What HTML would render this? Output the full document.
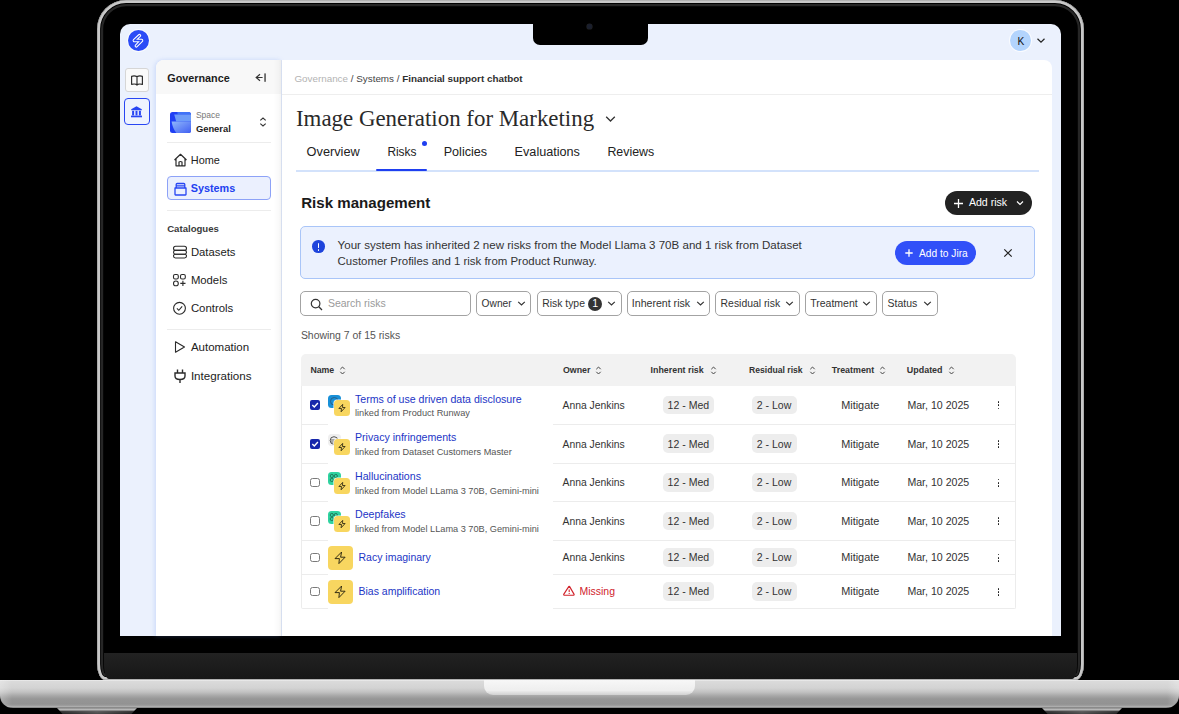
<!DOCTYPE html>
<html><head><meta charset="utf-8"><title>Risk management</title>
<style>
html,body{margin:0;padding:0;background:#000}
body{width:1179px;height:714px;background:#000;position:relative;overflow:hidden;font-family:"Liberation Sans",sans-serif}
.t{position:absolute;white-space:nowrap;line-height:1}
.r{position:absolute;display:block}
</style></head><body>
<div class="r" style="left:96.80px;top:-0.20px;width:987.00px;height:680.20px;border-radius:29px 29px 8px 8px / 29px 29px 16px 16px;background:#000;box-shadow:inset 0 0 0 0.6px #9a9a9a, inset 0 0 0 3.1px #c8c8c8, inset 0 0 0 4px #000, inset 0 0 0 6.2px #262626"></div>
<div class="r" style="left:104.00px;top:653.00px;width:973.00px;height:26.00px;background:linear-gradient(180deg,#222,#171717);border-radius:0 0 5px 5px / 0 0 13px 13px"></div>
<div class="r" style="left:0.00px;top:680.00px;width:1179.00px;height:28.00px;border-radius:0 0 13px 13px / 0 0 12px 12px;background:linear-gradient(180deg,#eeeeee 0px,#dadada 1.5px,#d3d3d3 8px,#c2c2c2 12px,#a6a6a6 16px,#969696 19px,#929292 24px,#a0a0a0 26px,#bababa 27px,#5a5a5a 28px)"></div>
<div class="r" style="left:0.00px;top:680.00px;width:1179.00px;height:28.00px;border-radius:0 0 14px 14px;background:linear-gradient(90deg,rgba(255,255,255,0.25) 0px,rgba(0,0,0,0) 12px,rgba(0,0,0,0) 1167px,rgba(255,255,255,0.25) 1179px)"></div>
<div class="r" style="left:484.00px;top:680.00px;width:211.00px;height:15.00px;border-radius:0 0 9px 9px;background:linear-gradient(180deg,#f7f7f7,#eeeeee 70%,#d0d0d0)"></div>
<div class="r" style="left:57.00px;top:708.00px;width:80.00px;height:6.00px;clip-path:polygon(0 0,100% 0,93% 100%,7% 100%);background:linear-gradient(180deg,#8f8f8f 0px,#a8a8a8 1.2px,#d0d0d0 2px,#404040 3px,#222 6px)"></div>
<div class="r" style="left:62.00px;top:711.00px;width:70.00px;height:3.00px;background:linear-gradient(90deg,rgba(0,0,0,0),rgba(255,255,255,0.18) 50%,rgba(0,0,0,0))"></div>
<div class="r" style="left:1042.00px;top:708.00px;width:80.00px;height:6.00px;clip-path:polygon(0 0,100% 0,93% 100%,7% 100%);background:linear-gradient(180deg,#8f8f8f 0px,#a8a8a8 1.2px,#d0d0d0 2px,#404040 3px,#222 6px)"></div>
<div class="r" style="left:1047.00px;top:711.00px;width:70.00px;height:3.00px;background:linear-gradient(90deg,rgba(0,0,0,0),rgba(255,255,255,0.18) 50%,rgba(0,0,0,0))"></div>
<div class="r" style="left:120.00px;top:24.00px;width:941.00px;height:612.00px;background:#ebf1fd;border-radius:10px 10px 0 0"></div>
<div class="r" style="left:533.00px;top:24.00px;width:115.00px;height:20.50px;background:#000;border-radius:0 0 7px 7px"></div>
<div class="r" style="left:587.20px;top:24.30px;width:4.60px;height:4.60px;background:#1a1f2e;border-radius:50%;box-shadow:0 0 0 0.6px #222"></div>
<div class="r" style="left:127.50px;top:30.30px;width:21.00px;height:21.00px;background:#2b4bf6;border-radius:50%;box-shadow:0 0 0 1px rgba(255,255,255,0.7)"></div>
<svg class="r" style="left:126.00px;top:29.00px" width="24" height="24" viewBox="0 0 24 24"><path d="M13.5 6.6 L8.3 11.5 L15.6 11.5 L10.3 16.9" fill="none" stroke="#fff" stroke-width="3.4" stroke-linecap="round" stroke-linejoin="round"/><path d="M13.5 6.6 L8.3 11.5 L15.6 11.5 L10.3 16.9" fill="none" stroke="#2b4bf6" stroke-width="1.3" stroke-linecap="round" stroke-linejoin="round"/></svg>
<div class="r" style="left:1010.40px;top:30.20px;width:21.00px;height:21.00px;background:#b3d4fd;border-radius:50%;box-shadow:0 0 0 1px rgba(255,255,255,0.7)"></div>
<div class="t" style="left:1017.40px;top:37px;font-size:10.20px;font-weight:400;color:#111;letter-spacing:0.000px;font-family:'Liberation Sans', sans-serif;">K</div>
<svg class="r" style="left:1036.00px;top:37.00px" width="10" height="7" viewBox="0 0 10 7"><path d="M1.5 1.8 L5 5.2 L8.5 1.8" fill="none" stroke="#222" stroke-width="1.2"/></svg>
<div class="r" style="left:125.00px;top:68.00px;width:24.00px;height:24.00px;background:#fafafa;border:1px solid #d6d6d6;box-sizing:border-box;border-radius:3px"></div>
<svg class="r" style="left:129.60px;top:73.50px" width="14" height="13" viewBox="0 0 14 13"><path d="M1.6 2.4 Q4.3 1.4 7 2.6 Q9.7 1.4 12.4 2.4 L12.4 10.4 Q9.7 9.6 7.6 10.4 L7 11.2 L6.4 10.4 Q4.3 9.6 1.6 10.4 Z M7 2.6 L7 10.8" fill="none" stroke="#2a2a2a" stroke-width="1.15" stroke-linejoin="round"/></svg>
<div class="r" style="left:124.00px;top:98.40px;width:26.00px;height:26.20px;background:#eef3fe;border:1.6px solid #2846f3;box-sizing:border-box;border-radius:4px"></div>
<svg class="r" style="left:129.70px;top:104.50px" width="13" height="13" viewBox="0 0 13 13"><path d="M6.5 1.3 L11.8 4.2 L11.8 5.2 L1.2 5.2 L1.2 4.2 Z" fill="#2846f3"/><rect x="2.1" y="5.8" width="2" height="4.6" fill="#2846f3"/><rect x="5.5" y="5.8" width="2" height="4.6" fill="#2846f3"/><rect x="8.9" y="5.8" width="2" height="4.6" fill="#2846f3"/><rect x="1" y="10.6" width="11" height="1.7" fill="#2846f3"/></svg>
<div class="r" style="left:156.00px;top:60.00px;width:125.00px;height:576.00px;background:#fff;border-radius:8px 0 0 0;box-shadow:-1px 0 4px rgba(110,150,240,0.28)"></div>
<div class="r" style="left:156.00px;top:60.00px;width:125.00px;height:34.30px;background:#f8f8f8;border-radius:8px 0 0 0"></div>
<div class="r" style="left:273.00px;top:60.00px;width:8.50px;height:576.00px;background:linear-gradient(90deg,rgba(0,0,0,0),rgba(0,0,0,0.02) 60%,rgba(0,0,0,0.055))"></div>
<div class="t" style="left:167.30px;top:73px;font-size:10.80px;font-weight:700;color:#1c1c1c;letter-spacing:0.000px;font-family:'Liberation Sans', sans-serif;">Governance</div>
<svg class="r" style="left:254.00px;top:72.00px" width="13" height="11" viewBox="0 0 13 11"><path d="M6 2.2 L2.2 5.5 L6 8.8 M2.4 5.5 L8.6 5.5" fill="none" stroke="#333" stroke-width="1.2"/><rect x="10.4" y="1.4" width="1.3" height="8.4" fill="#333"/></svg>
<svg class="r" style="left:169.70px;top:111.50px" width="21" height="21" viewBox="0 0 21 21"><defs><linearGradient id="sg" x1="0" y1="0" x2="1" y2="1"><stop offset="0" stop-color="#8fb6fb"/><stop offset="1" stop-color="#4160f2"/></linearGradient></defs><rect width="21" height="21" rx="2.5" fill="#1f3ff4"/><path d="M7.4 0 L18.5 0 Q21 0 21 2.5 L21 2.6 L7.6 2.6 Z" fill="#3f73f7"/><path d="M4.2 2.6 L21 2.6 L21 9.6 L6.2 9.6 Z" fill="#6d9cf8"/><path d="M1.6 9.6 L21 9.6 L21 18.5 Q21 21 18.5 21 L6.4 21 Q2.6 16.5 1.6 9.6 Z" fill="url(#sg)"/></svg>
<div class="t" style="left:195.90px;top:111px;font-size:8.50px;font-weight:400;color:#777;letter-spacing:0.000px;font-family:'Liberation Sans', sans-serif;">Space</div>
<div class="t" style="left:195.90px;top:124px;font-size:9.40px;font-weight:700;color:#1c1c1c;letter-spacing:0.000px;font-family:'Liberation Sans', sans-serif;">General</div>
<svg class="r" style="left:258.00px;top:116.00px" width="10" height="12" viewBox="0 0 10 12"><path d="M2.3 4.4 L5 2 L7.7 4.4 M2.3 7.6 L5 10 L7.7 7.6" fill="none" stroke="#333" stroke-width="1.1"/></svg>
<div class="r" style="left:167.00px;top:142.00px;width:104.00px;height:1.00px;background:#ececec"></div>
<svg class="r" style="left:172.50px;top:153.00px" width="15" height="14" viewBox="0 0 15 14"><path d="M1.5 7 L7.5 1.3 L13.5 7 M3 5.8 L3 12.8 L12 12.8 L12 5.8 M6 12.8 L6 9 Q7.5 8 9 9 L9 12.8" fill="none" stroke="#2b2b2b" stroke-width="1.2" stroke-linejoin="round"/></svg>
<div class="t" style="left:190.80px;top:155px;font-size:10.90px;font-weight:400;color:#222;letter-spacing:0.000px;font-family:'Liberation Sans', sans-serif;">Home</div>
<div class="r" style="left:166.70px;top:176.30px;width:104.30px;height:24.00px;background:#ebf0fe;border:1px solid #8da2f7;box-sizing:border-box;border-radius:4px"></div>
<svg class="r" style="left:172.50px;top:181.50px" width="15" height="14" viewBox="0 0 15 14"><path d="M2 6 L13 6 L13 12.5 Q13 13 12.5 13 L2.5 13 Q2 13 2 12.5 Z M3.2 6 L3.2 2.5 Q3.2 1.5 4.2 1.5 L10.8 1.5 Q11.8 1.5 11.8 2.5 L11.8 6 M3.2 3.8 L11.8 3.8" fill="none" stroke="#2846f3" stroke-width="1.3" stroke-linejoin="round"/></svg>
<div class="t" style="left:190.80px;top:183px;font-size:10.80px;font-weight:700;color:#2141f0;letter-spacing:0.000px;font-family:'Liberation Sans', sans-serif;">Systems</div>
<div class="r" style="left:167.00px;top:210.00px;width:104.00px;height:1.00px;background:#ececec"></div>
<div class="t" style="left:167.20px;top:224px;font-size:9.60px;font-weight:700;color:#3a3a3a;letter-spacing:0.000px;font-family:'Liberation Sans', sans-serif;">Catalogues</div>
<svg class="r" style="left:172.00px;top:245.00px" width="16" height="14" viewBox="0 0 16 14"><rect x="1.5" y="1.2" width="13" height="4.2" rx="2.1" fill="none" stroke="#2b2b2b" stroke-width="1.1"/><rect x="1.5" y="5.4" width="13" height="3.8" rx="1.9" fill="none" stroke="#2b2b2b" stroke-width="1.1"/><rect x="1.5" y="9.2" width="13" height="3.8" rx="1.9" fill="none" stroke="#2b2b2b" stroke-width="1.1"/></svg>
<div class="t" style="left:190.90px;top:247px;font-size:11.30px;font-weight:400;color:#222;letter-spacing:0.000px;font-family:'Liberation Sans', sans-serif;">Datasets</div>
<svg class="r" style="left:172.00px;top:273.00px" width="16" height="14" viewBox="0 0 16 14"><rect x="1.5" y="1.5" width="4.8" height="4.5" rx="1.5" fill="none" stroke="#2b2b2b" stroke-width="1.1"/><rect x="8.5" y="1.5" width="4.8" height="4.5" rx="1.5" fill="none" stroke="#2b2b2b" stroke-width="1.1"/><circle cx="3.9" cy="10.4" r="2.4" fill="none" stroke="#2b2b2b" stroke-width="1.1"/><path d="M10.9 7.8 L10.9 13 M8.3 10.4 L13.5 10.4" stroke="#2b2b2b" stroke-width="1.1"/></svg>
<div class="t" style="left:190.90px;top:275px;font-size:11.30px;font-weight:400;color:#222;letter-spacing:0.000px;font-family:'Liberation Sans', sans-serif;">Models</div>
<svg class="r" style="left:172.00px;top:301.00px" width="16" height="14" viewBox="0 0 16 14"><circle cx="7.5" cy="7.3" r="5.9" fill="none" stroke="#2b2b2b" stroke-width="1.1"/><path d="M4.9 7.4 L6.8 9.3 L10.2 5.3" fill="none" stroke="#2b2b2b" stroke-width="1.1"/></svg>
<div class="t" style="left:190.90px;top:303px;font-size:11.40px;font-weight:400;color:#222;letter-spacing:0.000px;font-family:'Liberation Sans', sans-serif;">Controls</div>
<div class="r" style="left:167.00px;top:329.00px;width:104.00px;height:1.00px;background:#ececec"></div>
<svg class="r" style="left:172.00px;top:340.00px" width="16" height="14" viewBox="0 0 16 14"><path d="M3.5 1.8 L12.5 7 L3.5 12.2 Z" fill="none" stroke="#2b2b2b" stroke-width="1.1" stroke-linejoin="round"/></svg>
<div class="t" style="left:190.90px;top:342px;font-size:11.50px;font-weight:400;color:#222;letter-spacing:0.000px;font-family:'Liberation Sans', sans-serif;">Automation</div>
<svg class="r" style="left:172.00px;top:368.00px" width="16" height="16" viewBox="0 0 16 16"><path d="M5.5 1.5 L5.5 5 M10.5 1.5 L10.5 5 M3 5 L13 5 L13 8 Q13 11.5 8 11.5 Q3 11.5 3 8 Z M8 11.5 L8 15" fill="none" stroke="#2b2b2b" stroke-width="1.4"/></svg>
<div class="t" style="left:190.90px;top:370px;font-size:11.60px;font-weight:400;color:#222;letter-spacing:0.000px;font-family:'Liberation Sans', sans-serif;">Integrations</div>
<div class="r" style="left:281.50px;top:60.00px;width:770.50px;height:576.00px;background:#fff;border-radius:0 8px 0 0"></div>
<div class="r" style="left:281.50px;top:93.60px;width:770.50px;height:1.60px;background:linear-gradient(180deg,#f3f3f3,#eeeeee 50%,#f6f6f6)"></div>
<div class="t" style="left:294.40px;top:74px;font-size:9.85px;font-weight:400;color:#444;letter-spacing:0.000px;font-family:'Liberation Sans', sans-serif;"><span style="color:#b3b3b3">Governance</span> / Systems / <span style="font-weight:700;color:#2e2e2e">Financial support chatbot</span></div>
<div class="t" style="left:296.00px;top:108px;font-size:22.90px;font-weight:400;color:#2a2a2a;letter-spacing:0.000px;font-family:'Liberation Serif', serif;">Image Generation for Marketing</div>
<svg class="r" style="left:604.00px;top:114.00px" width="13" height="10" viewBox="0 0 13 10"><path d="M2.2 2.8 L6.5 7 L10.8 2.8" fill="none" stroke="#333" stroke-width="1.3"/></svg>
<div class="r" style="left:295.50px;top:170.00px;width:743.50px;height:1.50px;background:#d3e2fb"></div>
<div class="r" style="left:376.20px;top:168.60px;width:51.30px;height:2.60px;background:#1f3ff0;border-radius:1px"></div>
<div class="r" style="left:421.60px;top:140.90px;width:5.40px;height:5.40px;background:#1f3ff0;border-radius:50%"></div>
<div class="t" style="left:306.60px;top:146px;font-size:12.75px;font-weight:400;color:#222;letter-spacing:0.000px;font-family:'Liberation Sans', sans-serif;">Overview</div>
<div class="t" style="left:387.40px;top:147px;font-size:11.90px;font-weight:400;color:#222;letter-spacing:0.000px;font-family:'Liberation Sans', sans-serif;">Risks</div>
<div class="t" style="left:443.70px;top:146px;font-size:12.60px;font-weight:400;color:#222;letter-spacing:0.000px;font-family:'Liberation Sans', sans-serif;">Policies</div>
<div class="t" style="left:514.60px;top:146px;font-size:12.65px;font-weight:400;color:#222;letter-spacing:0.000px;font-family:'Liberation Sans', sans-serif;">Evaluations</div>
<div class="t" style="left:607.40px;top:146px;font-size:12.40px;font-weight:400;color:#222;letter-spacing:0.000px;font-family:'Liberation Sans', sans-serif;">Reviews</div>
<div class="t" style="left:301.20px;top:195px;font-size:15.10px;font-weight:700;color:#1a1a1a;letter-spacing:0.000px;font-family:'Liberation Sans', sans-serif;">Risk management</div>
<div class="r" style="left:945.00px;top:190.80px;width:87.30px;height:23.80px;background:#222;border-radius:12px"></div>
<svg class="r" style="left:952.50px;top:197.50px" width="11" height="11" viewBox="0 0 11 11"><path d="M5.5 1 L5.5 10 M1 5.5 L10 5.5" stroke="#fff" stroke-width="1.3"/></svg>
<div class="t" style="left:968.90px;top:197px;font-size:10.60px;font-weight:400;color:#fff;letter-spacing:0.000px;font-family:'Liberation Sans', sans-serif;">Add risk</div>
<svg class="r" style="left:1014.50px;top:198.50px" width="10" height="8" viewBox="0 0 10 8"><path d="M2 2.5 L5 5.5 L8 2.5" fill="none" stroke="#fff" stroke-width="1.2"/></svg>
<div class="r" style="left:300.10px;top:226.40px;width:735.10px;height:53.00px;background:#ebf1fe;border:1px solid #a9c5f8;box-sizing:border-box;border-radius:5px"></div>
<div class="r" style="left:312.40px;top:240.10px;width:12.60px;height:12.60px;background:#1e44dc;border-radius:50%"></div>
<div class="r" style="left:317.90px;top:242.60px;width:1.60px;height:5.60px;background:#fff;border-radius:1px"></div>
<div class="r" style="left:317.90px;top:249.30px;width:1.60px;height:1.60px;background:#fff;border-radius:50%"></div>
<div class="t" style="left:337.60px;top:240px;font-size:11.56px;font-weight:400;color:#333;letter-spacing:0.000px;font-family:'Liberation Sans', sans-serif;">Your system has inherited 2 new risks from the Model Llama 3 70B and 1 risk from Dataset</div>
<div class="t" style="left:337.60px;top:256px;font-size:11.45px;font-weight:400;color:#333;letter-spacing:0.000px;font-family:'Liberation Sans', sans-serif;">Customer Profiles and 1 risk from Product Runway.</div>
<div class="r" style="left:895.20px;top:241.10px;width:80.80px;height:24.20px;background:#3150f8;border-radius:12px"></div>
<svg class="r" style="left:903.60px;top:248.00px" width="10" height="10" viewBox="0 0 10 10"><path d="M5 1.3 L5 8.7 M1.3 5 L8.7 5" stroke="#fff" stroke-width="1.3"/></svg>
<div class="t" style="left:919.00px;top:249px;font-size:10.20px;font-weight:400;color:#fff;letter-spacing:0.000px;font-family:'Liberation Sans', sans-serif;">Add to Jira</div>
<svg class="r" style="left:1002.50px;top:248.20px" width="10" height="10" viewBox="0 0 10 10"><path d="M1.3 1.3 L8.7 8.7 M8.7 1.3 L1.3 8.7" stroke="#222" stroke-width="1.2"/></svg>
<div class="r" style="left:300.30px;top:291.30px;width:171.10px;height:25.20px;background:#fff;border:1px solid #a3a3a3;box-sizing:border-box;border-radius:5px"></div>
<svg class="r" style="left:309.50px;top:297.50px" width="13" height="13" viewBox="0 0 13 13"><circle cx="5.6" cy="5.6" r="4.3" fill="none" stroke="#333" stroke-width="1.2"/><path d="M8.8 8.8 L12 12" stroke="#333" stroke-width="1.3"/></svg>
<div class="t" style="left:327.90px;top:298px;font-size:10.50px;font-weight:400;color:#9a9a9a;letter-spacing:0.000px;font-family:'Liberation Sans', sans-serif;">Search risks</div>
<div class="r" style="left:476.30px;top:291.30px;width:55.20px;height:25.20px;background:#fff;border:1px solid #a3a3a3;box-sizing:border-box;border-radius:5px"></div>
<div class="t" style="left:481.60px;top:299px;font-size:10.20px;font-weight:400;color:#333;letter-spacing:0.000px;font-family:'Liberation Sans', sans-serif;">Owner</div>
<svg class="r" style="left:516.50px;top:299.80px" width="9" height="7" viewBox="0 0 9 7"><path d="M1.2 1.8 L4.5 5 L7.8 1.8" fill="none" stroke="#333" stroke-width="1.15"/></svg>
<div class="r" style="left:537.10px;top:291.30px;width:84.50px;height:25.20px;background:#fff;border:1px solid #a3a3a3;box-sizing:border-box;border-radius:5px"></div>
<div class="t" style="left:542.20px;top:299px;font-size:10.40px;font-weight:400;color:#333;letter-spacing:0.000px;font-family:'Liberation Sans', sans-serif;">Risk type</div>
<div class="r" style="left:588.10px;top:296.50px;width:14.40px;height:14.40px;background:#333;border-radius:50%"></div>
<div class="t" style="left:592.30px;top:298px;font-size:10.60px;font-weight:400;color:#fff;letter-spacing:0.000px;font-family:'Liberation Sans', sans-serif;">1</div>
<svg class="r" style="left:606.50px;top:299.80px" width="9" height="7" viewBox="0 0 9 7"><path d="M1.2 1.8 L4.5 5 L7.8 1.8" fill="none" stroke="#333" stroke-width="1.15"/></svg>
<div class="r" style="left:626.70px;top:291.30px;width:83.60px;height:25.20px;background:#fff;border:1px solid #a3a3a3;box-sizing:border-box;border-radius:5px"></div>
<div class="t" style="left:631.80px;top:298px;font-size:10.60px;font-weight:400;color:#333;letter-spacing:0.000px;font-family:'Liberation Sans', sans-serif;">Inherent risk</div>
<svg class="r" style="left:695.50px;top:299.80px" width="9" height="7" viewBox="0 0 9 7"><path d="M1.2 1.8 L4.5 5 L7.8 1.8" fill="none" stroke="#333" stroke-width="1.15"/></svg>
<div class="r" style="left:715.40px;top:291.30px;width:84.30px;height:25.20px;background:#fff;border:1px solid #a3a3a3;box-sizing:border-box;border-radius:5px"></div>
<div class="t" style="left:720.60px;top:299px;font-size:10.40px;font-weight:400;color:#333;letter-spacing:0.000px;font-family:'Liberation Sans', sans-serif;">Residual risk</div>
<svg class="r" style="left:784.50px;top:299.80px" width="9" height="7" viewBox="0 0 9 7"><path d="M1.2 1.8 L4.5 5 L7.8 1.8" fill="none" stroke="#333" stroke-width="1.15"/></svg>
<div class="r" style="left:805.00px;top:291.30px;width:72.40px;height:25.20px;background:#fff;border:1px solid #a3a3a3;box-sizing:border-box;border-radius:5px"></div>
<div class="t" style="left:810.20px;top:298px;font-size:10.50px;font-weight:400;color:#333;letter-spacing:0.000px;font-family:'Liberation Sans', sans-serif;">Treatment</div>
<svg class="r" style="left:862.30px;top:299.80px" width="9" height="7" viewBox="0 0 9 7"><path d="M1.2 1.8 L4.5 5 L7.8 1.8" fill="none" stroke="#333" stroke-width="1.15"/></svg>
<div class="r" style="left:882.40px;top:291.30px;width:55.20px;height:25.20px;background:#fff;border:1px solid #a3a3a3;box-sizing:border-box;border-radius:5px"></div>
<div class="t" style="left:887.60px;top:298px;font-size:10.50px;font-weight:400;color:#333;letter-spacing:0.000px;font-family:'Liberation Sans', sans-serif;">Status</div>
<svg class="r" style="left:922.50px;top:299.80px" width="9" height="7" viewBox="0 0 9 7"><path d="M1.2 1.8 L4.5 5 L7.8 1.8" fill="none" stroke="#333" stroke-width="1.15"/></svg>
<div class="t" style="left:300.90px;top:331px;font-size:10.45px;font-weight:400;color:#555;letter-spacing:0.000px;font-family:'Liberation Sans', sans-serif;">Showing 7 of 15 risks</div>
<div class="r" style="left:300.50px;top:380.00px;width:715.00px;height:228.80px;background:#fff;border:1px solid #ececec;border-top:none;box-sizing:border-box;border-radius:0 0 2px 2px"></div>
<div class="r" style="left:300.50px;top:354.00px;width:715.00px;height:31.60px;background:#f2f2f2;border-radius:5px 5px 0 0"></div>
<div class="t" style="left:310.40px;top:366px;font-size:8.75px;font-weight:700;color:#333;letter-spacing:0.000px;font-family:'Liberation Sans', sans-serif;">Name</div>
<svg class="r" style="left:339.00px;top:365.50px" width="7" height="9" viewBox="0 0 7 9"><path d="M1.3 3.2 L3.5 1 L5.7 3.2 M1.3 5.8 L3.5 8 L5.7 5.8" fill="none" stroke="#444" stroke-width="1"/></svg>
<div class="t" style="left:562.90px;top:366px;font-size:8.85px;font-weight:700;color:#333;letter-spacing:0.000px;font-family:'Liberation Sans', sans-serif;">Owner</div>
<svg class="r" style="left:595.00px;top:365.50px" width="7" height="9" viewBox="0 0 7 9"><path d="M1.3 3.2 L3.5 1 L5.7 3.2 M1.3 5.8 L3.5 8 L5.7 5.8" fill="none" stroke="#444" stroke-width="1"/></svg>
<div class="t" style="left:650.60px;top:366px;font-size:8.85px;font-weight:700;color:#333;letter-spacing:0.000px;font-family:'Liberation Sans', sans-serif;">Inherent risk</div>
<svg class="r" style="left:710.30px;top:365.50px" width="7" height="9" viewBox="0 0 7 9"><path d="M1.3 3.2 L3.5 1 L5.7 3.2 M1.3 5.8 L3.5 8 L5.7 5.8" fill="none" stroke="#444" stroke-width="1"/></svg>
<div class="t" style="left:749.10px;top:366px;font-size:8.60px;font-weight:700;color:#333;letter-spacing:0.000px;font-family:'Liberation Sans', sans-serif;">Residual risk</div>
<svg class="r" style="left:809.20px;top:365.50px" width="7" height="9" viewBox="0 0 7 9"><path d="M1.3 3.2 L3.5 1 L5.7 3.2 M1.3 5.8 L3.5 8 L5.7 5.8" fill="none" stroke="#444" stroke-width="1"/></svg>
<div class="t" style="left:831.80px;top:366px;font-size:8.90px;font-weight:700;color:#333;letter-spacing:0.000px;font-family:'Liberation Sans', sans-serif;">Treatment</div>
<svg class="r" style="left:879.00px;top:365.50px" width="7" height="9" viewBox="0 0 7 9"><path d="M1.3 3.2 L3.5 1 L5.7 3.2 M1.3 5.8 L3.5 8 L5.7 5.8" fill="none" stroke="#444" stroke-width="1"/></svg>
<div class="t" style="left:906.80px;top:366px;font-size:8.95px;font-weight:700;color:#333;letter-spacing:0.000px;font-family:'Liberation Sans', sans-serif;">Updated</div>
<svg class="r" style="left:948.00px;top:365.50px" width="7" height="9" viewBox="0 0 7 9"><path d="M1.3 3.2 L3.5 1 L5.7 3.2 M1.3 5.8 L3.5 8 L5.7 5.8" fill="none" stroke="#444" stroke-width="1"/></svg>
<div class="r" style="left:300.50px;top:423.80px;width:715.00px;height:1.00px;background:#ececec"></div>
<div class="r" style="left:310.10px;top:400.15px;width:10.00px;height:9.60px;background:#1727ab;border-radius:2px"></div>
<svg class="r" style="left:310.10px;top:400.15px" width="10" height="10" viewBox="0 0 10 10"><path d="M2.3 5.1 L4.3 7 L7.9 3" fill="none" stroke="#fff" stroke-width="1.4"/></svg>
<div class="t" style="left:562.60px;top:401px;font-size:10.35px;font-weight:400;color:#333;letter-spacing:0.000px;font-family:'Liberation Sans', sans-serif;">Anna Jenkins</div>
<div class="r" style="left:663.00px;top:395.65px;width:51.40px;height:18.60px;background:#ededed;border-radius:5px"></div>
<div class="t" style="left:667.60px;top:400px;font-size:10.55px;font-weight:400;color:#333;letter-spacing:0.000px;font-family:'Liberation Sans', sans-serif;">12 - Med</div>
<div class="r" style="left:752.10px;top:395.65px;width:45.40px;height:18.60px;background:#ededed;border-radius:5px"></div>
<div class="t" style="left:756.70px;top:400px;font-size:10.55px;font-weight:400;color:#333;letter-spacing:0.000px;font-family:'Liberation Sans', sans-serif;">2 - Low</div>
<div class="t" style="left:841.20px;top:400px;font-size:10.90px;font-weight:400;color:#333;letter-spacing:0.000px;font-family:'Liberation Sans', sans-serif;">Mitigate</div>
<div class="t" style="left:907.40px;top:400px;font-size:10.60px;font-weight:400;color:#333;letter-spacing:0.000px;font-family:'Liberation Sans', sans-serif;">Mar, 10 2025</div>
<div class="r" style="left:997.60px;top:401.30px;width:1.80px;height:1.80px;background:#151515;border-radius:50%"></div>
<div class="r" style="left:997.60px;top:404.40px;width:1.80px;height:1.80px;background:#151515;border-radius:50%"></div>
<div class="r" style="left:997.60px;top:407.50px;width:1.80px;height:1.80px;background:#151515;border-radius:50%"></div>
<div class="r" style="left:300.50px;top:462.70px;width:715.00px;height:1.00px;background:#ececec"></div>
<div class="r" style="left:310.10px;top:438.95px;width:10.00px;height:9.60px;background:#1727ab;border-radius:2px"></div>
<svg class="r" style="left:310.10px;top:438.95px" width="10" height="10" viewBox="0 0 10 10"><path d="M2.3 5.1 L4.3 7 L7.9 3" fill="none" stroke="#fff" stroke-width="1.4"/></svg>
<div class="t" style="left:562.60px;top:440px;font-size:10.35px;font-weight:400;color:#333;letter-spacing:0.000px;font-family:'Liberation Sans', sans-serif;">Anna Jenkins</div>
<div class="r" style="left:663.00px;top:434.45px;width:51.40px;height:18.60px;background:#ededed;border-radius:5px"></div>
<div class="t" style="left:667.60px;top:439px;font-size:10.55px;font-weight:400;color:#333;letter-spacing:0.000px;font-family:'Liberation Sans', sans-serif;">12 - Med</div>
<div class="r" style="left:752.10px;top:434.45px;width:45.40px;height:18.60px;background:#ededed;border-radius:5px"></div>
<div class="t" style="left:756.70px;top:439px;font-size:10.55px;font-weight:400;color:#333;letter-spacing:0.000px;font-family:'Liberation Sans', sans-serif;">2 - Low</div>
<div class="t" style="left:841.20px;top:439px;font-size:10.90px;font-weight:400;color:#333;letter-spacing:0.000px;font-family:'Liberation Sans', sans-serif;">Mitigate</div>
<div class="t" style="left:907.40px;top:439px;font-size:10.60px;font-weight:400;color:#333;letter-spacing:0.000px;font-family:'Liberation Sans', sans-serif;">Mar, 10 2025</div>
<div class="r" style="left:997.60px;top:440.10px;width:1.80px;height:1.80px;background:#151515;border-radius:50%"></div>
<div class="r" style="left:997.60px;top:443.20px;width:1.80px;height:1.80px;background:#151515;border-radius:50%"></div>
<div class="r" style="left:997.60px;top:446.30px;width:1.80px;height:1.80px;background:#151515;border-radius:50%"></div>
<div class="r" style="left:300.50px;top:500.90px;width:715.00px;height:1.00px;background:#ececec"></div>
<div class="r" style="left:310.10px;top:477.50px;width:10.00px;height:9.60px;border:1.2px solid #7a7a7a;box-sizing:border-box;border-radius:2.5px;background:#fff"></div>
<div class="t" style="left:562.60px;top:478px;font-size:10.35px;font-weight:400;color:#333;letter-spacing:0.000px;font-family:'Liberation Sans', sans-serif;">Anna Jenkins</div>
<div class="r" style="left:663.00px;top:473.00px;width:51.40px;height:18.60px;background:#ededed;border-radius:5px"></div>
<div class="t" style="left:667.60px;top:477px;font-size:10.55px;font-weight:400;color:#333;letter-spacing:0.000px;font-family:'Liberation Sans', sans-serif;">12 - Med</div>
<div class="r" style="left:752.10px;top:473.00px;width:45.40px;height:18.60px;background:#ededed;border-radius:5px"></div>
<div class="t" style="left:756.70px;top:477px;font-size:10.55px;font-weight:400;color:#333;letter-spacing:0.000px;font-family:'Liberation Sans', sans-serif;">2 - Low</div>
<div class="t" style="left:841.20px;top:477px;font-size:10.90px;font-weight:400;color:#333;letter-spacing:0.000px;font-family:'Liberation Sans', sans-serif;">Mitigate</div>
<div class="t" style="left:907.40px;top:477px;font-size:10.60px;font-weight:400;color:#333;letter-spacing:0.000px;font-family:'Liberation Sans', sans-serif;">Mar, 10 2025</div>
<div class="r" style="left:997.60px;top:478.65px;width:1.80px;height:1.80px;background:#151515;border-radius:50%"></div>
<div class="r" style="left:997.60px;top:481.75px;width:1.80px;height:1.80px;background:#151515;border-radius:50%"></div>
<div class="r" style="left:997.60px;top:484.85px;width:1.80px;height:1.80px;background:#151515;border-radius:50%"></div>
<div class="r" style="left:300.50px;top:539.80px;width:715.00px;height:1.00px;background:#ececec"></div>
<div class="r" style="left:310.10px;top:516.05px;width:10.00px;height:9.60px;border:1.2px solid #7a7a7a;box-sizing:border-box;border-radius:2.5px;background:#fff"></div>
<div class="t" style="left:562.60px;top:517px;font-size:10.35px;font-weight:400;color:#333;letter-spacing:0.000px;font-family:'Liberation Sans', sans-serif;">Anna Jenkins</div>
<div class="r" style="left:663.00px;top:511.55px;width:51.40px;height:18.60px;background:#ededed;border-radius:5px"></div>
<div class="t" style="left:667.60px;top:516px;font-size:10.55px;font-weight:400;color:#333;letter-spacing:0.000px;font-family:'Liberation Sans', sans-serif;">12 - Med</div>
<div class="r" style="left:752.10px;top:511.55px;width:45.40px;height:18.60px;background:#ededed;border-radius:5px"></div>
<div class="t" style="left:756.70px;top:516px;font-size:10.55px;font-weight:400;color:#333;letter-spacing:0.000px;font-family:'Liberation Sans', sans-serif;">2 - Low</div>
<div class="t" style="left:841.20px;top:516px;font-size:10.90px;font-weight:400;color:#333;letter-spacing:0.000px;font-family:'Liberation Sans', sans-serif;">Mitigate</div>
<div class="t" style="left:907.40px;top:516px;font-size:10.60px;font-weight:400;color:#333;letter-spacing:0.000px;font-family:'Liberation Sans', sans-serif;">Mar, 10 2025</div>
<div class="r" style="left:997.60px;top:517.20px;width:1.80px;height:1.80px;background:#151515;border-radius:50%"></div>
<div class="r" style="left:997.60px;top:520.30px;width:1.80px;height:1.80px;background:#151515;border-radius:50%"></div>
<div class="r" style="left:997.60px;top:523.40px;width:1.80px;height:1.80px;background:#151515;border-radius:50%"></div>
<div class="r" style="left:300.50px;top:573.90px;width:715.00px;height:1.00px;background:#ececec"></div>
<div class="r" style="left:310.10px;top:552.55px;width:10.00px;height:9.60px;border:1.2px solid #7a7a7a;box-sizing:border-box;border-radius:2.5px;background:#fff"></div>
<div class="t" style="left:562.60px;top:553px;font-size:10.35px;font-weight:400;color:#333;letter-spacing:0.000px;font-family:'Liberation Sans', sans-serif;">Anna Jenkins</div>
<div class="r" style="left:663.00px;top:548.05px;width:51.40px;height:18.60px;background:#ededed;border-radius:5px"></div>
<div class="t" style="left:667.60px;top:552px;font-size:10.55px;font-weight:400;color:#333;letter-spacing:0.000px;font-family:'Liberation Sans', sans-serif;">12 - Med</div>
<div class="r" style="left:752.10px;top:548.05px;width:45.40px;height:18.60px;background:#ededed;border-radius:5px"></div>
<div class="t" style="left:756.70px;top:552px;font-size:10.55px;font-weight:400;color:#333;letter-spacing:0.000px;font-family:'Liberation Sans', sans-serif;">2 - Low</div>
<div class="t" style="left:841.20px;top:552px;font-size:10.90px;font-weight:400;color:#333;letter-spacing:0.000px;font-family:'Liberation Sans', sans-serif;">Mitigate</div>
<div class="t" style="left:907.40px;top:552px;font-size:10.60px;font-weight:400;color:#333;letter-spacing:0.000px;font-family:'Liberation Sans', sans-serif;">Mar, 10 2025</div>
<div class="r" style="left:997.60px;top:553.70px;width:1.80px;height:1.80px;background:#151515;border-radius:50%"></div>
<div class="r" style="left:997.60px;top:556.80px;width:1.80px;height:1.80px;background:#151515;border-radius:50%"></div>
<div class="r" style="left:997.60px;top:559.90px;width:1.80px;height:1.80px;background:#151515;border-radius:50%"></div>
<div class="r" style="left:310.10px;top:586.60px;width:10.00px;height:9.60px;border:1.2px solid #7a7a7a;box-sizing:border-box;border-radius:2.5px;background:#fff"></div>
<svg class="r" style="left:561.50px;top:585.40px" width="14" height="12" viewBox="0 0 14 12"><path d="M6.9 1.4 Q7.2 1.1 7.5 1.4 L12.1 9.4 Q12.3 10.1 11.6 10.2 L2.2 10.2 Q1.5 10.1 1.7 9.4 Z" fill="none" stroke="#d1232b" stroke-width="1.15" stroke-linejoin="round"/><path d="M7.2 4.4 L7.2 6.9" stroke="#d1232b" stroke-width="1.1"/><circle cx="7.2" cy="8.4" r="0.6" fill="#d1232b"/></svg>
<div class="t" style="left:579.60px;top:587px;font-size:10.45px;font-weight:400;color:#d0222b;letter-spacing:0.000px;font-family:'Liberation Sans', sans-serif;">Missing</div>
<div class="r" style="left:663.00px;top:582.10px;width:51.40px;height:18.60px;background:#ededed;border-radius:5px"></div>
<div class="t" style="left:667.60px;top:586px;font-size:10.55px;font-weight:400;color:#333;letter-spacing:0.000px;font-family:'Liberation Sans', sans-serif;">12 - Med</div>
<div class="r" style="left:752.10px;top:582.10px;width:45.40px;height:18.60px;background:#ededed;border-radius:5px"></div>
<div class="t" style="left:756.70px;top:586px;font-size:10.55px;font-weight:400;color:#333;letter-spacing:0.000px;font-family:'Liberation Sans', sans-serif;">2 - Low</div>
<div class="t" style="left:841.20px;top:586px;font-size:10.90px;font-weight:400;color:#333;letter-spacing:0.000px;font-family:'Liberation Sans', sans-serif;">Mitigate</div>
<div class="t" style="left:907.40px;top:586px;font-size:10.60px;font-weight:400;color:#333;letter-spacing:0.000px;font-family:'Liberation Sans', sans-serif;">Mar, 10 2025</div>
<div class="r" style="left:997.60px;top:587.75px;width:1.80px;height:1.80px;background:#151515;border-radius:50%"></div>
<div class="r" style="left:997.60px;top:590.85px;width:1.80px;height:1.80px;background:#151515;border-radius:50%"></div>
<div class="r" style="left:997.60px;top:593.95px;width:1.80px;height:1.80px;background:#151515;border-radius:50%"></div>
<div class="r" style="left:328.00px;top:386.20px;width:224.50px;height:223.30px;background:#fff"></div>
<div class="r" style="left:328.10px;top:394.75px;width:13.10px;height:12.90px;background:#1890d8;border-radius:3.5px"></div>
<svg class="r" style="left:328.10px;top:394.75px" width="13" height="13" viewBox="0 0 13 13"><circle cx="6.3" cy="6.3" r="3.8" fill="none" stroke="#2a5f86" stroke-width="1"/></svg>
<div class="r" style="left:333.90px;top:400.35px;width:15.70px;height:15.90px;background:#f8d65f;border-radius:3.5px;box-shadow:0 0 0 0.6px rgba(255,255,255,0.9)"></div>
<svg class="r" style="left:333.90px;top:400.35px" width="16" height="16" viewBox="0 0 16 16"><path d="M8.7 4.4 L4.9 8.5 L7.5 8.5 L7.1 11.8 L11.1 7.5 L8.5 7.5 Z" fill="none" stroke="#2a2510" stroke-width="0.85" stroke-linejoin="round"/></svg>
<div class="t" style="left:355.00px;top:394px;font-size:10.60px;font-weight:400;color:#1c35c6;letter-spacing:0.000px;font-family:'Liberation Sans', sans-serif;">Terms of use driven data disclosure</div>
<div class="t" style="left:355.00px;top:409px;font-size:9.20px;font-weight:400;color:#555;letter-spacing:0.000px;font-family:'Liberation Sans', sans-serif;">linked from Product Runway</div>
<div class="r" style="left:328.10px;top:433.55px;width:13.10px;height:12.90px;background:#efefef;border-radius:3.5px"></div>
<svg class="r" style="left:328.10px;top:433.55px" width="13" height="13" viewBox="0 0 13 13"><circle cx="6" cy="6.5" r="3.8" fill="none" stroke="#555" stroke-width="1"/><path d="M2.5 6 L9.5 6 M2.8 8 L9.2 8" stroke="#555" stroke-width="0.9"/></svg>
<div class="r" style="left:333.90px;top:439.15px;width:15.70px;height:15.90px;background:#f8d65f;border-radius:3.5px;box-shadow:0 0 0 0.6px rgba(255,255,255,0.9)"></div>
<svg class="r" style="left:333.90px;top:439.15px" width="16" height="16" viewBox="0 0 16 16"><path d="M8.7 4.4 L4.9 8.5 L7.5 8.5 L7.1 11.8 L11.1 7.5 L8.5 7.5 Z" fill="none" stroke="#2a2510" stroke-width="0.85" stroke-linejoin="round"/></svg>
<div class="t" style="left:355.00px;top:432px;font-size:10.60px;font-weight:400;color:#1c35c6;letter-spacing:0.000px;font-family:'Liberation Sans', sans-serif;">Privacy infringements</div>
<div class="t" style="left:355.00px;top:448px;font-size:9.20px;font-weight:400;color:#555;letter-spacing:0.000px;font-family:'Liberation Sans', sans-serif;">linked from Dataset Customers Master</div>
<div class="r" style="left:328.10px;top:472.10px;width:13.10px;height:12.90px;background:#2fd3a0;border-radius:3.5px"></div>
<svg class="r" style="left:328.10px;top:472.10px" width="13" height="13" viewBox="0 0 13 13"><circle cx="3.8" cy="4" r="1.6" fill="none" stroke="#1d6e55" stroke-width="0.9"/><circle cx="7.8" cy="4" r="1.6" fill="none" stroke="#1d6e55" stroke-width="0.9"/><circle cx="3.8" cy="8" r="1.6" fill="none" stroke="#1d6e55" stroke-width="0.9"/></svg>
<div class="r" style="left:333.90px;top:477.70px;width:15.70px;height:15.90px;background:#f8d65f;border-radius:3.5px;box-shadow:0 0 0 0.6px rgba(255,255,255,0.9)"></div>
<svg class="r" style="left:333.90px;top:477.70px" width="16" height="16" viewBox="0 0 16 16"><path d="M8.7 4.4 L4.9 8.5 L7.5 8.5 L7.1 11.8 L11.1 7.5 L8.5 7.5 Z" fill="none" stroke="#2a2510" stroke-width="0.85" stroke-linejoin="round"/></svg>
<div class="t" style="left:355.00px;top:471px;font-size:10.60px;font-weight:400;color:#1c35c6;letter-spacing:0.000px;font-family:'Liberation Sans', sans-serif;">Hallucinations</div>
<div class="t" style="left:355.00px;top:487px;font-size:9.20px;font-weight:400;color:#555;letter-spacing:0.000px;font-family:'Liberation Sans', sans-serif;">linked from Model LLama 3 70B, Gemini-mini</div>
<div class="r" style="left:328.10px;top:510.65px;width:13.10px;height:12.90px;background:#2fd3a0;border-radius:3.5px"></div>
<svg class="r" style="left:328.10px;top:510.65px" width="13" height="13" viewBox="0 0 13 13"><circle cx="3.8" cy="4" r="1.6" fill="none" stroke="#1d6e55" stroke-width="0.9"/><circle cx="7.8" cy="4" r="1.6" fill="none" stroke="#1d6e55" stroke-width="0.9"/><circle cx="3.8" cy="8" r="1.6" fill="none" stroke="#1d6e55" stroke-width="0.9"/></svg>
<div class="r" style="left:333.90px;top:516.25px;width:15.70px;height:15.90px;background:#f8d65f;border-radius:3.5px;box-shadow:0 0 0 0.6px rgba(255,255,255,0.9)"></div>
<svg class="r" style="left:333.90px;top:516.25px" width="16" height="16" viewBox="0 0 16 16"><path d="M8.7 4.4 L4.9 8.5 L7.5 8.5 L7.1 11.8 L11.1 7.5 L8.5 7.5 Z" fill="none" stroke="#2a2510" stroke-width="0.85" stroke-linejoin="round"/></svg>
<div class="t" style="left:355.00px;top:509px;font-size:10.60px;font-weight:400;color:#1c35c6;letter-spacing:0.000px;font-family:'Liberation Sans', sans-serif;">Deepfakes</div>
<div class="t" style="left:355.00px;top:525px;font-size:9.20px;font-weight:400;color:#555;letter-spacing:0.000px;font-family:'Liberation Sans', sans-serif;">linked from Model LLama 3 70B, Gemini-mini</div>
<div class="r" style="left:328.40px;top:545.85px;width:24.30px;height:24.10px;background:#f8d660;border-radius:4px"></div>
<svg class="r" style="left:328.40px;top:545.85px" width="24" height="24" viewBox="0 0 24 24"><path d="M13.6 6.0 L7.0 12.6 L11.4 12.6 L10.9 17.6 L17.1 11.2 L12.6 11.2 Z" fill="none" stroke="#2a2510" stroke-width="0.95" stroke-linejoin="round"/></svg>
<div class="t" style="left:358.50px;top:552px;font-size:10.50px;font-weight:400;color:#1c35c6;letter-spacing:0.000px;font-family:'Liberation Sans', sans-serif;">Racy imaginary</div>
<div class="r" style="left:328.40px;top:579.90px;width:24.30px;height:24.10px;background:#f8d660;border-radius:4px"></div>
<svg class="r" style="left:328.40px;top:579.90px" width="24" height="24" viewBox="0 0 24 24"><path d="M13.6 6.0 L7.0 12.6 L11.4 12.6 L10.9 17.6 L17.1 11.2 L12.6 11.2 Z" fill="none" stroke="#2a2510" stroke-width="0.95" stroke-linejoin="round"/></svg>
<div class="t" style="left:358.50px;top:586px;font-size:10.50px;font-weight:400;color:#1c35c6;letter-spacing:0.000px;font-family:'Liberation Sans', sans-serif;">Bias amplification</div>
</body></html>
